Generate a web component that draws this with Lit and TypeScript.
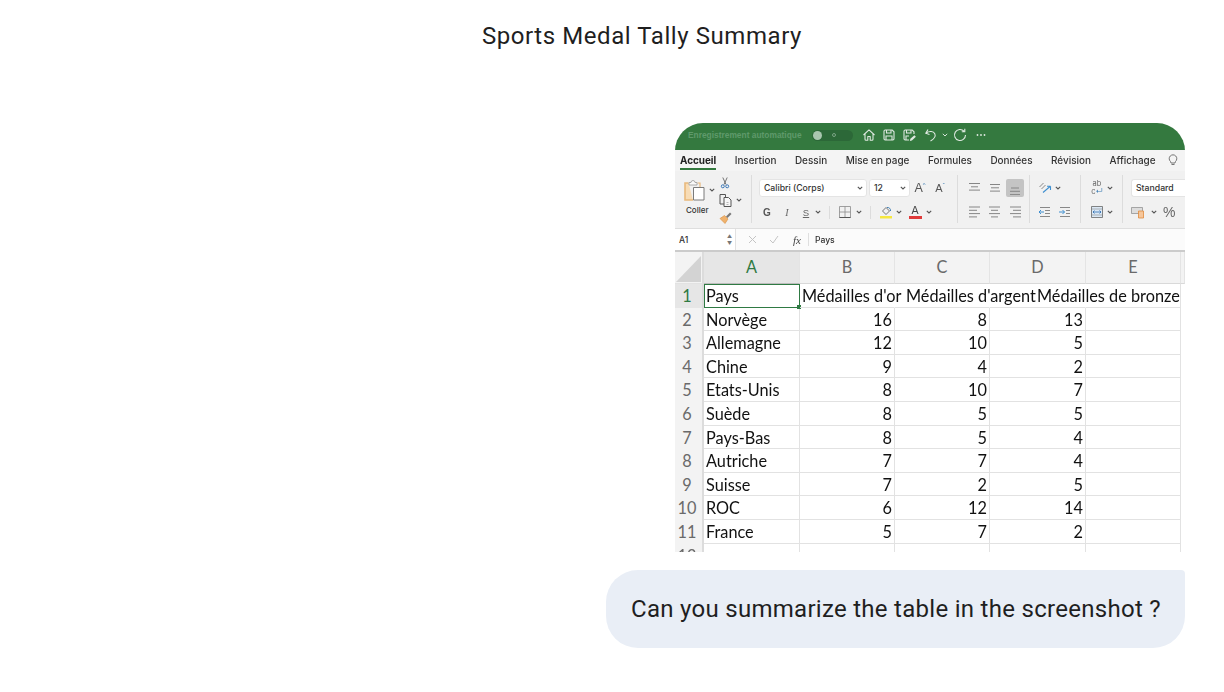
import { LitElement, css, html, svg } from 'lit'
import { customElement } from 'lit/decorators.js'

const TABS = ['Accueil', 'Insertion', 'Dessin', 'Mise en page', 'Formules', 'Données', 'Révision', 'Affichage']
const COLS = ['A', 'B', 'C', 'D', 'E', '']
const ROWS: [string, number, number, number][] = [
  ['Norvège', 16, 8, 13],
  ['Allemagne', 12, 10, 5],
  ['Chine', 9, 4, 2],
  ['Etats-Unis', 8, 10, 7],
  ['Suède', 8, 5, 5],
  ['Pays-Bas', 8, 5, 4],
  ['Autriche', 7, 7, 4],
  ['Suisse', 7, 2, 5],
  ['ROC', 6, 12, 14],
  ['France', 5, 7, 2],
]

const ico = (w: number, body: unknown, h = w) => html`<svg class="ico" width=${w} height=${h} viewBox="0 0 ${w} ${h}" fill="none">${body}</svg>`
const chev = html`<svg class="chev" width="6" height="4" viewBox="0 0 6 4" fill="none"><path d="M.8.8 3 3l2.2-2.2" stroke="#555" stroke-width="1.100"/></svg>`
const chevLight = html`<svg class="chev" width="6" height="4" viewBox="0 0 6 4" fill="none"><path d="M.8.8 3 3l2.2-2.2" stroke="#d5e4d8" stroke-width="1"/></svg>`

// alignment glyphs: one line per [x1, x2], from the first y downwards
const lines = (xs: [number, number][], y: number, step = 3.3) =>
  ico(14, svg`${xs.map(([a, b], i) => svg`<path d="M${a} ${y + i * step}H${b}" stroke="#868686" stroke-width="1"/>`)}`)

const WHITE = '#dfe9e1'

@customElement('app-root')
export class AppRoot extends LitElement {
  static styles = css`
    :host {
      display: block;
      width: 1224px;
      height: 692px;
      background: #fff;
      overflow: hidden;
      font-family: Roboto, "Noto Sans", sans-serif;
      color: #1f1f1f;
    }
    .title {
      margin: 0;
      padding: 20px 0 0 60px;
      text-align: center;
      font-size: 24px;
      line-height: 32px;
      font-weight: 400;
      letter-spacing: .57px;
    }
    .turn {
      display: flex;
      flex-direction: column;
      align-items: flex-end;
      gap: 18px;
      padding: 71px 39px 0 0;
    }
    .shot {
      width: 510px;
      height: 429px;
      border-radius: 28px 28px 0 0;
      overflow: hidden;
      background: #fff;
      filter: blur(.35px);
      font-family: Inter, "Liberation Sans", sans-serif;
    }
    .ico { display: block; flex: none; }
    .chev { display: block; flex: none; }

    .titlebar {
      height: 27px;
      background: #34793f;
      display: flex;
      align-items: center;
      padding: 0 0 3px 13px;
      box-sizing: border-box;
    }
    .autosave {
      width: 124px;
      flex: none;
      font-family: "Liberation Sans", sans-serif;
      font-size: 8.4px;
      font-weight: 700;
      color: #5f9a6b;
      white-space: nowrap;
    }
    .toggle {
      width: 41px;
      height: 11px;
      margin-right: 9px;
      border-radius: 6px;
      background: #2c6838;
      display: flex;
      align-items: center;
      padding: 0 17px 0 1px;
      box-sizing: border-box;
      justify-content: space-between;
    }
    .knob { width: 9px; height: 9px; border-radius: 50%; background: #a9c6af; }
    .dot { width: 4px; height: 4px; border-radius: 50%; border: 1px solid #7ba384; box-sizing: border-box; }
    .quick { display: flex; align-items: center; gap: 6px; }
    .quick .chev { margin-left: -2px; margin-right: -1px; }
    .undo { margin-left: 2px; }
    .more { margin-left: 2px; }

    .tabs {
      height: 21px;
      background: #f4f4f4;
      display: flex;
      align-items: flex-start;
      padding: 4px 0 0 5px;
      box-sizing: border-box;
      font-size: 9.95px;
      font-weight: 500;
      color: #333;
    }
    .tab { height: 15px; line-height: 12px; white-space: nowrap; flex: none; margin-right: 18.5px; }
    .tab.on { font-weight: 700; letter-spacing: -.03px; color: #222; border-bottom: 2px solid #34793f; height: 14px; }
    .bulb { margin-left: -7px; }

    .ribbon {
      height: 58px;
      background: #f1f1f1;
      border-bottom: 1px solid #dedede;
      box-sizing: border-box;
      display: flex;
      padding: 7px 0 0 9px;
      overflow: hidden;
    }
    .group { display: flex; flex-direction: column; gap: 4px; flex: none; }
    .sep { width: 1px; height: 48px; margin-top: -3px; background: #dcdcdc; flex: none; }
    .row { display: flex; align-items: center; height: 20px; }
    .minisep { width: 1px; height: 13px; background: #dcdcdc; flex: none; margin: 0 8px; }
    .gap3 { width: 3px; flex: none; }
    .gap4 { width: 4px; flex: none; }
    .gap6 { width: 6px; flex: none; }
    .paste { width: 35px; flex: none; display: flex; flex-direction: column; }
    .paste-top { display: flex; align-items: center; gap: 2px; margin-left: -1px; }
    .paste span { font-size: 8px; font-weight: 500; color: #333; margin: 3px 0 0 2px; }
    .clip { width: 32px; margin-top: -3px; flex: none; display: flex; flex-direction: column; gap: 1px; }
    .clip div { display: flex; align-items: center; height: 16px; gap: 3px; }
    .select {
      height: 18px;
      background: #fff;
      border: 1px solid #e4e4e4;
      border-radius: 3px;
      box-sizing: border-box;
      display: flex;
      flex: none;
      align-items: center;
      justify-content: space-between;
      padding: 0 3px 0 4px;
      font-size: 8.7px;
      font-weight: 500;
      color: #333;
      white-space: nowrap;
    }
    .font-name { width: 108px; margin-right: 2px; }
    .font-size { width: 41px; }
    .standard { width: 80px; border-right: none; border-radius: 3px 0 0 3px; }
    .btn {
      width: 20px;
      height: 18px;
      display: flex;
      align-items: center;
      justify-content: center;
      flex: none;
      color: #555;
    }
    .btn.s { width: 18px; }
    .btn.on { background: #c4c4c4; border-radius: 2px; width: 18px; margin: 0 1px; }
    .letter { font-size: 10px; font-family: "Liberation Serif", serif; color: #666; }
    .letter.bold { font-family: "Liberation Sans", sans-serif; font-weight: 700; color: #555; }
    .letter.it { font-style: italic; }
    .letter.und { text-decoration: underline; font-family: "Liberation Sans", sans-serif; font-size: 9.5px; }
    .pull { margin-left: -2px; }
    .grow { font-size: 12.5px; font-weight: 300; color: #555; font-family: "Liberation Sans", sans-serif; }
    .grow.sm { font-size: 11px; }
    .grow sup { font-size: 6px; color: #3f7fb5; vertical-align: 5px; line-height: 0; }
    .pct { font-size: 14px; color: #666; font-family: "Liberation Sans", sans-serif; margin-left: 6px; }
    .wrap { width: 16px; font-size: 7.5px; line-height: 8px; text-align: center; color: #666; flex: none; }
    .merge { width: 16px; display: flex; justify-content: center; flex: none; }
    .narrow { gap: 2px; }
    .font-a { display: flex; flex-direction: column; align-items: center; width: 14px; font-size: 11px; line-height: 10px; color: #444; flex: none; }
    .font-a i { display: block; width: 13px; height: 3px; background: #e03a3a; margin-top: 1px; }

    .fbar {
      height: 23px;
      background: #fbfbfb;
      border-bottom: 2px solid #cbcbcb;
      box-sizing: border-box;
      display: flex;
      align-items: center;
      font-size: 8.6px;
      font-weight: 500;
      color: #333;
    }
    .name { width: 61px; flex: none; height: 100%; padding: 0 3px 0 4px; box-sizing: border-box; border-right: 1px solid #e2e2e2; display: flex; align-items: center; justify-content: space-between; background: #fff; }
    .stepper { font-size: 5px; line-height: 7px; color: #777; text-align: center; }
    .fx { font-family: "Liberation Serif", serif; font-style: italic; font-size: 11px; font-weight: 400; color: #444; margin-left: 5px; }
    .fbar-tools { display: flex; align-items: center; gap: 12px; padding-left: 12px; width: 52px; box-sizing: border-box; flex: none; }
    .fbar-div { width: 1px; height: 13px; background: #dfdfdf; margin: 0 6px 0 7px; }

    .sheet {
      display: grid;
      grid-template-columns: 29px 96px 95px 95px 96px 95px 4px;
      grid-template-rows: 32px repeat(11, 23.6px) 10px;
      height: 379px;
      overflow: hidden;
      font-family: Lato, Carlito, sans-serif;
      font-size: 16.3px;
      color: #111;
    }
    .cell {
      border-right: 1px solid #e2e2e2;
      border-bottom: 1px solid #e2e2e2;
      box-sizing: border-box;
      line-height: 23px;
      padding: 0 2px;
      white-space: nowrap;
      position: relative;
    }
    .cell.num { text-align: right; padding-right: 2px; }
    .cell.blank { border: none; }
    .hd {
      background: #f3f3f3;
      border-right: 1px solid #e4e4e4;
      border-bottom: 1px solid #d9d9d9;
      color: #6a6a6a;
      text-align: center;
      line-height: 30px;
      padding: 0;
    }
    .hd.on { background: #e6e6e6; color: #2f7a43; border-bottom: 1px solid #bdbdbd; }
    .rowh {
      background: #f3f3f3;
      border-right: 2px solid #dcdcdc;
      border-bottom: none;
      color: #6a6a6a;
      text-align: center;
      padding: 0 3px 0 0;
    }
    .rowh.on { color: #2f7a43; background: #e6e6e6; }
    .corner { background: #f3f3f3; border-right: 2px solid #dcdcdc; padding: 0; }
    .corner svg { display: block; }
    .selected { outline: 1.5px solid #2f7a43; outline-offset: -1px; z-index: 1; }
    .selected::after {
      content: '';
      position: absolute;
      right: -2px;
      bottom: -2px;
      width: 4px;
      height: 4px;
      background: #2f7a43;
    }
    .over { overflow: visible; z-index: 2; border-right-color: transparent; }
    .over-c { padding-left: 11px; }
    .over-d { padding-left: 47px; }

    .bubble {
      width: 579px;
      height: 78px;
      box-sizing: border-box;
      background: #e9eef6;
      border-radius: 32px 4px 32px 32px;
      padding-left: 25px;
      display: flex;
      align-items: center;
      font-size: 24px;
      line-height: 32px;
      letter-spacing: .285px;
      white-space: nowrap;
    }
  `

  private quickIcons() {
    const st = WHITE
    return html`
      <div class="quick">
        ${ico(14, svg`<path d="M1.5 7 7 1.800 12.500 7M3 5.800v5.400a1 1 0 0 0 1 1h1.800V8.500h2.400v3.700H10a1 1 0 0 0 1-1V5.800" stroke=${st} stroke-width="1.100" stroke-linejoin="round"/>`)}
        ${ico(14, svg`<path d="M2 3.200a1.200 1.200 0 0 1 1.200-1.200h7L12 3.800v7a1.200 1.200 0 0 1-1.200 1.200H3.200A1.200 1.200 0 0 1 2 10.800zM4.500 2v3h4.500V2M4 12V8h6v4" stroke=${st} stroke-width="1.100"/>`)}
        ${ico(14, svg`<path d="M7 12H3.200A1.200 1.200 0 0 1 2 10.800V3.200A1.200 1.200 0 0 1 3.200 2h7L12 3.800V6M4.500 2v3h4.500V2M4 12V8h3" stroke=${st} stroke-width="1.100"/><path d="m7.800 13 .6-2.200 4-3.600 1.500 1.500-4 3.700z" fill=${st}/>`)}
        <span class="undo">${ico(14, svg`<path d="M4 1.500 1.800 5.200l3.700 1.300M2.200 5c3.300-2.300 7.300-1.800 8.600.8 1.100 2.300-.7 5.300-4.300 7.200" stroke=${st} stroke-width="1.100"/>`)}</span>
        ${chevLight}
        ${ico(14, svg`<path d="M11 3.200A5.500 5.500 0 1 0 12.500 7M11.800.8v3h-3" stroke=${st} stroke-width="1.100"/>`)}
        <span class="more">${ico(12, svg`<circle cx="2.500" cy="6" r=".9" fill=${st}/><circle cx="6" cy="6" r=".9" fill=${st}/><circle cx="9.500" cy="6" r=".9" fill=${st}/>`)}</span>
      </div>`
  }

  private ribbon() {
    return html`
      <div class="ribbon">
        <div class="paste">
          <div class="paste-top">
            ${ico(24, svg`<path d="M5.500 5H2v17h8" fill="#f7dcb6" stroke="#e9b97c" stroke-width="1.600"/><path d="M14.500 5H17v4" stroke="#e9b97c" stroke-width="1.200"/><path d="M6 7V4.500h2a2 2 0 0 1 4 0h2V7z" fill="#fafafa" stroke="#9a9a9a" stroke-width=".8"/><path d="M10.500 9.500H21v12.500H10.500z" fill="#fff" stroke="#7b7b7b"/>`)}
            ${chev}
          </div>
          <span>Coller</span>
        </div>
        <div class="clip">
          <div>${ico(12, svg`<path d="M3.800.5 7 7.500M8.200.5 5 7.500" stroke="#666" stroke-width=".9"/><circle cx="3.800" cy="9.300" r="1.500" stroke="#2b6cb0" stroke-width=".9"/><circle cx="8.200" cy="9.300" r="1.500" stroke="#2b6cb0" stroke-width=".9"/>`)}</div>
          <div>${ico(14, svg`<path d="M1 1.500h5.500V11H1z" stroke="#555"/><path d="M5 4.500h4.500l2.500 2.500v6.500H5z" fill="#f7f7f7" stroke="#555"/><path d="M7.500 9.500h2M7.500 11.500h2" stroke="#999" stroke-width=".7"/>`)}${chev}</div>
          <div>${ico(13, svg`<path d="m7 5.500 4-4 1.500 1.500-4 4z" fill="#777"/><path d="m1 7.500 4.500-3 3.500 3.500-3 4.500z" fill="#efb26d" stroke="#d98d3e" stroke-width=".6"/>`)}</div>
        </div>
        <div class="sep" style="margin-right:7px"></div>

        <div class="group" style="width:198px">
          <div class="row">
            <div class="select font-name">Calibri (Corps)${chev}</div>
            <div class="select font-size">12${chev}</div>
            <div class="btn"><span class="grow">A<sup>^</sup></span></div>
            <div class="btn"><span class="grow sm">A<sup>ˇ</sup></span></div>
          </div>
          <div class="row pull">
            <div class="btn"><span class="letter bold">G</span></div>
            <div class="btn"><span class="letter it">I</span></div>
            <div class="btn s"><span class="letter und">S</span></div>
            ${chev}
            <div class="minisep"></div>
            ${ico(14, svg`<path d="M1.500 1.500h11v11h-11zM7 1.500v11M1.500 7h11" stroke="#8a8a8a" stroke-width=".8"/><path d="M1.500 12.500h11" stroke="#555"/>`)}
            <span class="gap4"></span>${chev}
            <div class="minisep"></div>
            ${ico(14, svg`<path d="m3.500 6 3.500-3.500 3.500 3.500-3.500 3.500z" stroke="#666" stroke-width=".9"/><path d="M8 2.500a3 3 0 0 1 3.500 3.500" stroke="#3f7fb5"/><path d="M1 11h12v2.500H1z" fill="#f6e73f"/>`)}
            <span class="gap3"></span>${chev}
            <span class="gap6"></span>
            <span class="font-a">A<i></i></span>
            <span class="gap4"></span>${chev}
          </div>
        </div>
        <div class="sep" style="margin-right:7px"></div>

        <div class="group" style="width:64px">
          <div class="row">
            <div class="btn">${lines([[1, 12], [3, 10], [1, 12]], 2.5)}</div>
            <div class="btn">${lines([[2, 12], [3, 11], [2, 12]], 3.5)}</div>
            <div class="btn on">${lines([[3, 11], [2, 12], [2, 12]], 7)}</div>
          </div>
          <div class="row">
            <div class="btn">${lines([[1, 12], [1, 9], [1, 12], [1, 9]], 2)}</div>
            <div class="btn">${lines([[1, 12], [3, 10], [1, 12], [3, 10]], 2)}</div>
            <div class="btn">${lines([[2, 13], [5, 13], [2, 13], [5, 13]], 2)}</div>
          </div>
        </div>
        <div class="sep" style="margin-right:5px"></div>

        <div class="group" style="width:45px">
          <div class="row">
            <div class="btn">${ico(14, svg`<path d="m1.500 6 4-4M3.500 8l4-4" stroke="#888" stroke-width="1"/><path d="m5 11.500 7-6M12.500 5.200V9M12.500 5.200H9" stroke="#3f8fd0" stroke-width="1.100"/>`)}</div>${chev}
          </div>
          <div class="row">
            <div class="btn">${ico(14, svg`<path d="M2 2.500h10M7 5.500h5M7 8.500h5M2 11.500h10" stroke="#888"/><path d="M1 7h5M3 5 1 7l2 2" stroke="#3f8fd0"/>`)}</div>
            <div class="btn">${ico(14, svg`<path d="M2 2.500h10M8 5.500h4M8 8.500h4M2 11.500h10" stroke="#888"/><path d="M1 7h5.500M4.500 5l2 2-2 2" stroke="#3f8fd0"/>`)}</div>
          </div>
        </div>
        <div class="sep" style="margin-right:8px"></div>

        <div class="group" style="width:33px">
          <div class="row narrow">
            <div class="wrap">ab<br>c<span style="color:#3f7fb5">↵</span></div>${chev}
          </div>
          <div class="row narrow">
            <span class="merge">${ico(14, svg`<path d="M1.500 1.500h11v11h-11z" fill="#dbe8f5" stroke="#666" stroke-width=".8"/><path d="M1.500 4h11M1.500 10h11" stroke="#888" stroke-width=".6"/><path d="M3 7h8M3 7l1.500-1.500M3 7l1.500 1.500M11 7 9.500 5.500M11 7 9.500 8.500" stroke="#2b6cb0" stroke-width=".8"/>`)}</span>${chev}
          </div>
        </div>
        <div class="sep" style="margin-right:8px"></div>

        <div class="group" style="width:80px">
          <div class="row"><div class="select standard">Standard</div></div>
          <div class="row">
            ${ico(14, svg`<path d="M.5 2.500h11v6H.5z" fill="#ddd" stroke="#888" stroke-width=".7"/><path d="M7.500 6h5v7h-5z" fill="#f6c69a" stroke="#e08a3c" stroke-width=".8"/>`)}
            <span class="gap6"></span>${chev}
            <span class="pct">%</span>
          </div>
        </div>
      </div>`
  }

  render() {
    return html`
      <h1 class="title">Sports Medal Tally Summary</h1>
      <div class="turn">
        <div class="shot">
          <div class="titlebar">
            <div class="autosave">Enregistrement automatique</div>
            <div class="toggle"><span class="knob"></span><span class="dot"></span></div>
            ${this.quickIcons()}
          </div>
          <div class="tabs">
            ${TABS.map((t, i) => html`<div class="tab ${i === 0 ? 'on' : ''}">${t}</div>`)}
            <span class="bulb">${ico(12, svg`<path d="M3.500 7.500a3.800 3.800 0 1 1 5 0L8 9H4zM4.500 10.500h3" stroke="#666" stroke-width=".9"/>`)}</span>
          </div>
          ${this.ribbon()}
          <div class="fbar">
            <div class="name">A1<span class="stepper">▲<br>▼</span></div>
            <div class="fbar-tools">
              ${ico(9, svg`<path d="m1 1 7 7M8 1 1 8" stroke="#c4c4c4"/>`)}
              ${ico(10, svg`<path d="m1 5 3 3 5-7" stroke="#c4c4c4"/>`)}
            </div>
            <span class="fx">fx</span>
            <div class="fbar-div"></div>
            <span>Pays</span>
          </div>
          <div class="sheet">
            <div class="cell corner">
              <svg width="27" height="31" viewBox="0 0 27 31"><path d="M26 4v26H1z" fill="#d3d3d3"/></svg>
            </div>
            ${COLS.map((c, i) => html`<div class="cell hd ${i === 0 ? 'on' : ''}">${c}</div>`)}

            <div class="cell rowh on">1</div>
            <div class="cell selected">Pays</div>
            <div class="cell over">Médailles d'or</div>
            <div class="cell over over-c">Médailles d'argent</div>
            <div class="cell over over-d">Médailles de bronze</div>
            <div class="cell"></div>
            <div class="cell blank"></div>

            ${ROWS.map(([name, a, b, c], i) => html`
              <div class="cell rowh">${i + 2}</div>
              <div class="cell">${name}</div>
              <div class="cell num">${a}</div>
              <div class="cell num">${b}</div>
              <div class="cell num">${c}</div>
              <div class="cell"></div>
              <div class="cell blank"></div>
            `)}
            <div class="cell rowh">12</div>
            <div class="cell"></div><div class="cell"></div><div class="cell"></div><div class="cell"></div><div class="cell"></div>
            <div class="cell blank"></div>
          </div>
        </div>
        <div class="bubble">Can you summarize the table in the screenshot ?</div>
      </div>
    `
  }
}
